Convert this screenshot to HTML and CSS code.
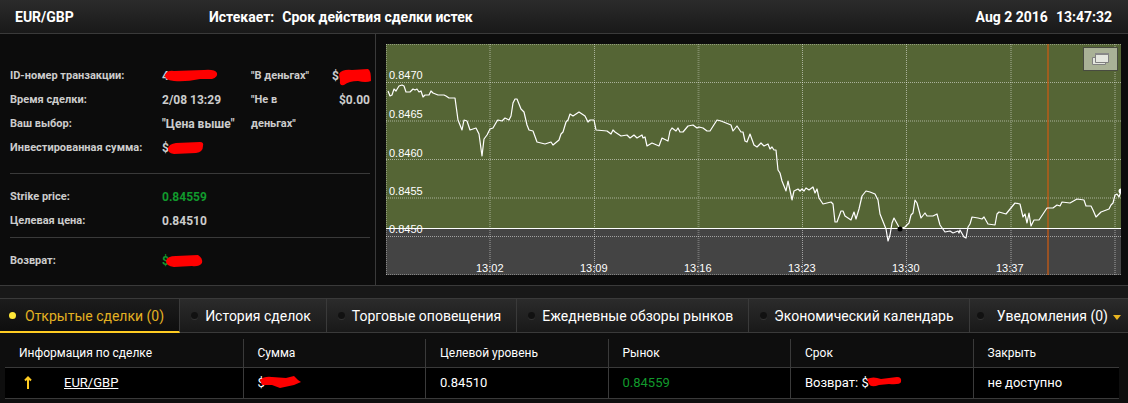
FILE: index.html
```html
<!DOCTYPE html>
<html lang="ru">
<head>
    <meta charset="UTF-8">
    <meta name="viewport" content="width=device-width, initial-scale=1.0">
    <title>EUR/GBP</title>
    <link rel="stylesheet" href="styles.css">
</head>
<body>
    <header class="topbar">
        <h1 class="pair">EUR/GBP</h1>
        <p class="expiry"><span>Истекает:</span> <span>Срок действия сделки истек</span></p>
        <p class="clock"><span>Aug 2 2016</span> <span>13:47:32</span></p>
    </header>

    <main class="deal">
        <section class="info">
            <div class="info-block info-main">
                <dl class="facts">
                    <dt>ID-номер транзакции:</dt>
                    <dd><span class="masked">4<svg class="scribble" width="56" height="14" viewBox="0 0 56 14"><path d="M3 6Q5 1 12 2L42 1Q53 0 55 4Q56 8 50 10L38 10Q24 13 12 12Q2 11 3 6Z"/></svg></span></dd>
                    <dt>Время сделки:</dt>
                    <dd>2/08 13:29</dd>
                    <dt>Ваш выбор:</dt>
                    <dd>"Цена выше"</dd>
                    <dt>Инвестированная сумма:</dt>
                    <dd><span class="masked">$<svg class="scribble" width="42" height="14" viewBox="0 0 42 14"><path d="M6 7Q7 3 14 2L38 1Q42 1 41 5Q41 11 34 12L12 13Q5 12 6 7Z"/></svg></span></dd>
                </dl>
                <dl class="payouts">
                    <dt>"В деньгах"</dt>
                    <dd><span class="masked masked-end">$<svg class="scribble" width="42" height="18" viewBox="0 0 42 18"><path d="M7 5Q10 0 20 1L36 0Q39 1 39 12Q34 14 26 12Q17 12 12 16Q7 17 8 12Z"/></svg></span></dd>
                    <dt>"Не в деньгах"</dt>
                    <dd>$0.00</dd>
                </dl>
            </div>
            <dl class="info-block facts">
                <dt>Strike price:</dt>
                <dd class="up">0.84559</dd>
                <dt>Целевая цена:</dt>
                <dd>0.84510</dd>
            </dl>
            <dl class="info-block facts">
                <dt>Возврат:</dt>
                <dd class="up"><span class="masked">$<svg class="scribble" width="42" height="14" viewBox="0 0 42 14"><path d="M4 7Q5 2 14 2L36 1Q41 4 40 9Q37 13 30 12L12 13Q4 12 4 7Z"/></svg></span></dd>
            </dl>
        </section>

        <section class="chart">
            <svg class="chart-plot" viewBox="0 0 735 231" role="img" aria-label="EUR/GBP">
                <rect class="zone-above" width="735" height="184"/>
                <rect class="zone-below" y="184" width="735" height="47"/>
                <g class="grid">
                    <path d="M0 38.5H735M0 115.5H735M0 192.5H735M208.5 0V231M416.5 0V231M520.5 0V231"/>
                    <path class="grid-edge" d="M0 .5H735M0 230.5H735M.5 0V231"/>
                    <path class="grid-soft" d="M0 77H735M0 154H735M104 0V231M312.500 0V231M625 0V231M729 0V231"/>
                </g>
                <path class="expiry-line" d="M662 0V231"/>
                <path class="target-line" d="M0 184.5H735"/>
                <g class="axis">
                    <text x="3" y="35">0.8470</text>
                    <text x="3" y="74">0.8465</text>
                    <text x="3" y="113">0.8460</text>
                    <text x="3" y="151">0.8455</text>
                    <text x="3" y="189">0.8450</text>
                    <text x="90" y="228">13:02</text>
                    <text x="194" y="228">13:09</text>
                    <text x="298" y="228">13:16</text>
                    <text x="402" y="228">13:23</text>
                    <text x="506" y="228">13:30</text>
                    <text x="610" y="228">13:37</text>
                </g>
                <polyline class="price" points="2,47 4,52 6,51 8,45 10,47 13,42 16,41 18,42 20,48 24,48 27,45 29,46 31,45 33,48 35,47 37,53 39,51 43,51 45,47 47,49 52,51 58,51 60,52 63,54 69,54 72,76 76,86 78,76 81,77 84,86 90,84 93,90 96,112 98,95 101,91 104,85 107,84 111,77 112,76 116,77 119,74 123,76 125,72 127,59 129,55 131,55 135,65 138,68 141,81 143,86 147,87 151,98 159,100 165,98 167,101 173,96 175,90 177,88 180,78 182,76 184,70 187,72 193,68 199,72 202,78 204,76 208,76 210,86 221,87 225,90 227,86 229,88 235,92 241,91 244,94 248,91 251,94 256,91 257,94 259,93 261,102 266,99 273,102 276,94 282,97 284,87 286,84 290,87 292,84 294,88 297,88 302,82 307,81 311,84 313,83 317,84 321,87 324,87 331,76 335,77 345,81 347,87 351,82 355,88 357,88 359,97 361,98 364,90 368,101 371,103 375,99 378,102 382,100 384,105 386,103 388,106 390,106 392,126 394,129 396,137 400,147 402,137 405,151 406,156 408,147 412,145 414,147 416,145 418,147 420,144 423,146 427,143 429,149 431,145 433,154 437,160 445,158 447,160 449,178 451,178 455,167 457,167 459,172 465,176 468,168 470,175 473,165 476,152 480,147 484,148 489,150 492,156 494,170 496,175 500,185 502,197 504,191 506,179 508,174 514,185 519,183 523,179 525,171 527,169 529,156 531,159 535,174 539,169 541,172 547,172 551,170 554,181 559,188 564,187 567,189 572,187 573,189 574,186 578,193 580,194 582,183 584,180 586,173 592,174 596,175 598,173 602,180 609,181 611,170 613,168 620,170 629,159 634,160 637,173 639,170 641,179 643,169 645,182 648,176 653,176 661,164 667,164 671,161 674,162 676,158 684,159 691,155 698,156 700,162 705,162 707,166 710,173 715,168 723,165 725,161 727,159 729,151 731,150 733,153 735,147"/>
                <circle class="entry" cx="514" cy="185" r="2.5"/>
                <circle class="last" cx="735" cy="147" r="2.5"/>
            </svg>
            <button class="popout" type="button" aria-label="Открыть график">
                <svg width="17" height="12" viewBox="0 0 17 12">
                    <path class="win" d="M.5 4.500H13.500V11.500H.5Z"/>
                    <path class="win" d="M3.500 .5H16.500V9.500H3.500Z"/>
                    <path class="win-bar" d="M3 1H17"/>
                </svg>
            </button>
        </section>
    </main>

    <nav class="tabs">
        <a class="tab active" href="#open"><i class="dot"></i>Открытые сделки (0)</a>
        <a class="tab" href="#history"><i class="dot"></i>История сделок</a>
        <a class="tab" href="#alerts"><i class="dot"></i>Торговые оповещения</a>
        <a class="tab" href="#reviews"><i class="dot"></i>Ежедневные обзоры рынков</a>
        <a class="tab" href="#calendar"><i class="dot"></i>Экономический календарь</a>
        <a class="tab notices" href="#notices"><i class="dot"></i>Уведомления (0)<i class="caret"></i></a>
    </nav>

    <section class="deals" id="open">
        <table>
            <thead>
                <tr>
                    <th class="col-info">Информация по сделке</th>
                    <th>Сумма</th>
                    <th>Целевой уровень</th>
                    <th>Рынок</th>
                    <th>Срок</th>
                    <th class="col-close">Закрыть</th>
                </tr>
            </thead>
            <tbody>
                <tr>
                    <td>
                        <div class="asset">
                            <svg class="arrow" width="8" height="13" viewBox="0 0 8 13"><path d="M4 13V2M1 4.500L4 1.500L7 4.500"/></svg>
                            <a href="#eurgbp">EUR/GBP</a>
                        </div>
                    </td>
                    <td><span class="masked">$<svg class="scribble" width="44" height="14" viewBox="0 0 44 14"><path d="M2 5Q6 1 14 2L28 3L36 1L40 5L43 7L36 10L22 13L14 10L4 10Z"/></svg></span></td>
                    <td>0.84510</td>
                    <td class="up">0.84559</td>
                    <td>Возврат: <span class="masked">$<svg class="scribble" width="42" height="14" viewBox="0 0 42 14"><path d="M6 4Q12 1 20 4L36 2Q41 2 40 7Q39 10 28 9L18 10Q10 13 8 9Z"/></svg></span></td>
                    <td>не доступно</td>
                </tr>
            </tbody>
        </table>
    </section>
</body>
</html>
```

FILE: styles.css
```css
* {
    margin: 0;
    padding: 0;
    box-sizing: border-box;
}

body {
    min-height: 100vh;
    background: #181818;
    color: #fff;
    font-family: Roboto, "Liberation Sans", sans-serif;
    font-size: 13px;
}

a {
    color: inherit;
}

/* Top bar */
.topbar {
    display: flex;
    align-items: center;
    height: 34px;
    padding: 0 16px 0 15px;
    border-bottom: 1px solid #3a3a3a;
    background: linear-gradient(#2b2b2b, #191919);
    font-size: 14px;
    font-weight: 700;
}

.pair {
    flex: 0 0 194px;
    font-size: 14px;
}

.expiry,
.clock {
    display: flex;
    gap: 8px;
}

.clock {
    margin-left: auto;
}

/* Deal details */
.deal {
    display: grid;
    grid-template-columns: 376px 1fr;
    border-bottom: 1px solid #3a3a3a;
    background: #0c0c0c;
}

.info {
    padding: 30px 5px 12px 10px;
    border-right: 1px solid #3a3a3a;
    color: #ccc;
    font-size: 12px;
    font-weight: 700;
}

.info-block {
    line-height: 24px;
}

.info-block + .info-block {
    border-top: 1px solid #3a3a3a;
}

.info-main {
    display: flex;
    gap: 12px;
    padding-bottom: 13px;
}

.info-main + .facts {
    padding: 11px 0 4px;
}

.info-block:last-child {
    padding-top: 11px;
}

.facts {
    display: grid;
    grid-template-columns: 152px 77px;
}

.facts dt,
.payouts dt {
    font-size: 11px;
}

.payouts {
    flex: 1;
    display: grid;
    grid-template-columns: 70px 1fr;
    align-content: start;
}

.payouts dd {
    text-align: right;
}

.up,
.deals .up {
    color: #119a2c;
}

/* Hidden amounts */
.masked {
    position: relative;
}

.masked-end {
    margin-right: 31px;
}

.scribble {
    position: absolute;
    left: 0;
    top: 0;
    fill: #f00;
}

/* Chart */
.chart {
    position: relative;
    padding: 10px 7px 10px 10px;
}

.chart-plot {
    display: block;
    width: 100%;
    height: auto;
}

.zone-above {
    fill: #556535;
}

.zone-below {
    fill: #444;
}

.grid path {
    fill: none;
    stroke: #fff;
    stroke-opacity: 0.5;
    stroke-dasharray: 1 1;
}

.grid .grid-edge {
    stroke-opacity: 0.35;
}

.grid .grid-soft {
    stroke-width: 2;
    stroke-opacity: 0.25;
}

.expiry-line {
    stroke: #c85a14;
    stroke-opacity: 0.65;
    stroke-width: 2;
}

.target-line {
    stroke: #fff;
}

.axis text {
    fill: #fff;
    font-family: "Liberation Sans", sans-serif;
    font-size: 11px;
}

.price {
    fill: none;
    stroke: #fff;
    stroke-width: 1.2;
    stroke-linejoin: round;
}

.entry {
    fill: #000;
}

.last {
    fill: #fff;
}

.popout {
    position: absolute;
    top: 13px;
    right: 10px;
    display: grid;
    place-items: center;
    width: 35px;
    height: 24px;
    border: 1px solid #484b40;
    background: #a9b196;
    cursor: pointer;
}

.win {
    fill: #e4e6df;
    stroke: #808080;
}

.win-bar {
    stroke: #888;
    stroke-width: 2;
}

/* Tabs */
.tabs {
    display: flex;
    margin-top: 12px;
    border-top: 1px solid #3a3a3a;
    border-bottom: 1px solid #3a3a3a;
    background: linear-gradient(#2b2b2b, #191919);
}

.tab {
    display: flex;
    align-items: center;
    height: 33px;
    padding: 1px 15px 0 11px;
    border-right: 1px solid #3a3a3a;
    font-size: 14px;
    text-decoration: none;
    white-space: nowrap;
}

.dot {
    width: 7px;
    height: 7px;
    margin: 0 7px 2px 0;
    border-radius: 50%;
    background: #111;
    box-shadow: 0 1px 0 #333;
}

.tab.active {
    height: 34px;
    margin-bottom: -1px;
    padding-top: 2px;
    padding-left: 9px;
    border-bottom: 2px solid #fc2;
    background: linear-gradient(#1c1c1c, #0e0e0e);
    color: #e3b122;
}

.active .dot {
    margin-right: 9px;
    background: #ffe838;
    box-shadow: none;
}

.notices {
    flex: 1;
    padding: 1px 7px 0;
    border-right: 0;
}

.notices .dot {
    margin-right: auto;
}

.caret {
    margin: 2px 0 0 5px;
    border: 4px solid transparent;
    border-top: 5px solid #e9b520;
    border-bottom: 0;
}

/* Deals table */
.deals {
    padding: 6px 9px 4px 5px;
    background: #0e0e0e;
}

.deals table {
    width: 100%;
    border-collapse: collapse;
    table-layout: fixed;
}

.deals th,
.deals td {
    padding: 0 14px;
    border-right: 1px solid #3a3a3a;
    border-bottom: 1px solid #3a3a3a;
    font-weight: 400;
    text-align: left;
}

.deals th:last-child,
.deals td:last-child {
    border-right: 0;
}

.deals th {
    height: 28px;
    padding-top: 1px;
    font-size: 12px;
}

.deals td {
    height: 31px;
    background: #000;
}

.col-info {
    width: 238px;
}

.col-close {
    width: 146px;
}

.asset {
    display: flex;
    align-items: center;
    gap: 32px;
    padding-left: 5px;
}

.arrow {
    fill: none;
    stroke: #fc2;
    stroke-width: 2;
}
```
